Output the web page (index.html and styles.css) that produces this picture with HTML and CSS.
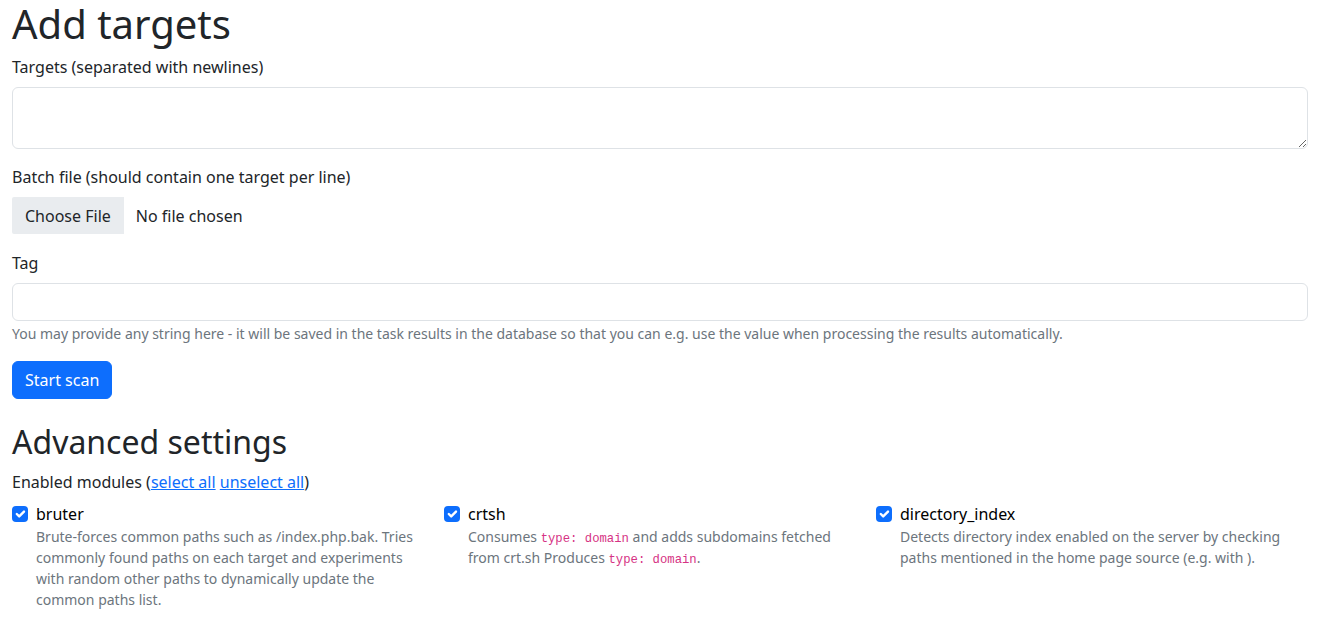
FILE: index.html
```html
<!DOCTYPE html>
<html lang="en">
<head>
<meta charset="utf-8">
<title>Add targets</title>
<link rel="stylesheet" href="styles.css">
</head>
<body>
<div class="container">
  <h1 class="title">Add targets</h1>
  <form class="form">
    <div class="field">
      <label class="label">Targets (separated with newlines)</label>
      <textarea class="control textarea" rows="2"></textarea>
    </div>
    <div class="field">
      <label class="label">Batch file (should contain one target per line)</label>
      <div class="file">
        <span class="file-btn">Choose File</span>
        <span class="file-name">No file chosen</span>
      </div>
    </div>
    <div class="field">
      <label class="label">Tag</label>
      <input class="control input" type="text">
      <div class="help">You may provide any string here - it will be saved in the task results in the database so that you can e.g. use the value when processing the results automatically.</div>
    </div>
    <div class="actions">
      <span class="btn-primary">Start scan</span>
    </div>
    <h2 class="subtitle">Advanced settings</h2>
    <div class="modules-head">Enabled modules (<a href="#" class="link">select all</a> <a href="#" class="link">unselect all</a>)</div>
    <div class="modules">
      <div class="module">
        <div class="check-row">
          <span class="check"><svg viewBox="0 0 20 20" width="16" height="16"><path d="M6 10l3 3l6-6" fill="none" stroke="#fff" stroke-width="3" stroke-linecap="round" stroke-linejoin="round"/></svg></span>
          <span class="module-name">bruter</span>
        </div>
        <div class="module-desc">Brute-forces common paths such as /index.php.bak. Tries commonly found paths on each target and experiments with random other paths to dynamically update the common paths list.</div>
      </div>
      <div class="module">
        <div class="check-row">
          <span class="check"><svg viewBox="0 0 20 20" width="16" height="16"><path d="M6 10l3 3l6-6" fill="none" stroke="#fff" stroke-width="3" stroke-linecap="round" stroke-linejoin="round"/></svg></span>
          <span class="module-name">crtsh</span>
        </div>
        <div class="module-desc">Consumes <code class="code">type: domain</code> and adds subdomains fetched from crt.sh Produces <code class="code">type: domain</code>.</div>
      </div>
      <div class="module">
        <div class="check-row">
          <span class="check"><svg viewBox="0 0 20 20" width="16" height="16"><path d="M6 10l3 3l6-6" fill="none" stroke="#fff" stroke-width="3" stroke-linecap="round" stroke-linejoin="round"/></svg></span>
          <span class="module-name">directory_index</span>
        </div>
        <div class="module-desc">Detects directory index enabled on the server by checking paths mentioned in the home page source (e.g. with ).</div>
      </div>
    </div>
  </form>
</div>
</body>
</html>
```
FILE: styles.css
```css
* { box-sizing: border-box; }
html, body { margin: 0; padding: 0; }
body {
  font-family: "Noto Sans", "DejaVu Sans", sans-serif;
  font-size: 16px;
  line-height: 1.5;
  color: #212529;
  background: #fff;
}
.container {
  padding: 0 15px 0 12px;
}
.title {
  font-size: 40px;
  font-weight: 400;
  line-height: 1.2;
  margin: 0 0 7px;
}
.form { display: block; }
.field { margin-bottom: 16px; }
.label {
  display: block;
  margin-bottom: 8px;
}
.control {
  display: block;
  width: 100%;
  font: inherit;
  line-height: 1.5;
  color: #212529;
  background: #fff;
  border: 1px solid #dee2e6;
  border-radius: 6px;
  padding: 6px 12px;
}
.textarea { height: 62px; resize: vertical; }
.input { height: 38px; }
.help {
  margin-top: 2px;
  padding-bottom: 1px;
  font-size: 14px;
  color: #6c757d;
}
.file {
  display: flex;
  align-items: flex-start;
  gap: 12px;
  height: 38px;
}
.file-btn {
  display: flex;
  align-items: center;
  height: 37px;
  padding: 0 13px;
  background: #e9ecef;
  border-radius: 2px 0 0 2px;
}
.file-name { line-height: 38px; }
.actions { margin-bottom: 24px; }
.btn-primary {
  display: inline-block;
  background: #0d6efd;
  color: #fff;
  border: 1px solid #0d6efd;
  border-radius: 6px;
  padding: 6px 12px;
  line-height: 24px;
}
.subtitle {
  font-size: 32px;
  font-weight: 400;
  line-height: 1.2;
  margin: 0 0 9px;
}
.modules-head { margin-bottom: 8px; }
.link { color: #0d6efd; text-decoration: underline; }
.modules {
  display: grid;
  grid-template-columns: repeat(3, 1fr);
}
.module { padding-right: 24px; }
.check-row {
  display: flex;
  align-items: flex-start;
}
.check {
  flex: none;
  width: 16px;
  height: 16px;
  margin-top: 4px;
  margin-right: 8px;
  background: #0d6efd;
  border-radius: 4px;
  display: flex;
}
.module-name { color: #000; }
.module-desc {
  padding-left: 24px;
  font-size: 14px;
  line-height: 21px;
  color: #6c757d;
}
.code {
  font-family: "Liberation Mono", "DejaVu Sans Mono", monospace;
  font-size: 12.25px;
  line-height: 1;
  color: #d63384;
}
```
